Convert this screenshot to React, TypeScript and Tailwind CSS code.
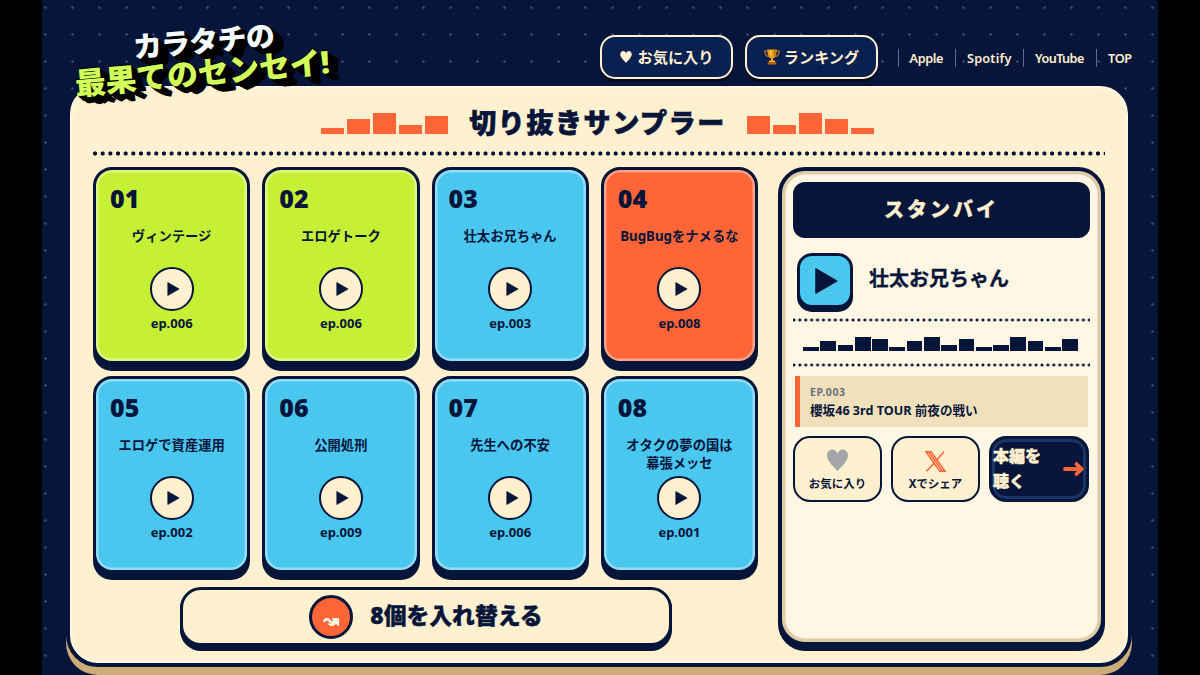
import clsx from "clsx";

const clips = [
  { no: "01", title: ["ヴィンテージ"], ep: "ep.006", color: "bg-[#c6f036]" },
  { no: "02", title: ["エロゲトーク"], ep: "ep.006", color: "bg-[#c6f036]" },
  { no: "03", title: ["壮太お兄ちゃん"], ep: "ep.003", color: "bg-[#4ac7ef]" },
  { no: "04", title: ["BugBugをナメるな"], ep: "ep.008", color: "bg-[#ff6536]" },
  { no: "05", title: ["エロゲで資産運用"], ep: "ep.002", color: "bg-[#4ac7ef]" },
  { no: "06", title: ["公開処刑"], ep: "ep.009", color: "bg-[#4ac7ef]" },
  { no: "07", title: ["先生への不安"], ep: "ep.006", color: "bg-[#4ac7ef]" },
  { no: "08", title: ["オタクの夢の国は", "幕張メッセ"], ep: "ep.001", color: "bg-[#4ac7ef]" },
];

const titleBars = [6, 15, 21, 9, 18];
const waveBars = [4, 10, 6, 14, 12, 4, 10, 14, 6, 12, 4, 6, 14, 10, 4, 12];
const links = [
  { label: "Apple", style: "w-[57.500px] tracking-[-0.400px]" },
  { label: "Spotify", style: "w-[68px] tracking-[0.200px]" },
  { label: "YouTube", style: "w-[73px] tracking-[-0.600px]" },
  { label: "TOP", style: "w-[36px] tracking-[-0.300px]" },
];

function Heart({ className }: { className?: string }) {
  return (
    <svg viewBox="0 0 22 23" className={className} fill="currentColor">
      <path d="M11 23C9.500 19.500 0 13.500 0 6.200 0 2.500 2.400 0 5.600 0 8.400 0 10.300 1.800 11 4.300 11.700 1.800 13.600 0 16.400 0 19.600 0 22 2.500 22 6.200 22 13.500 12.500 19.500 11 23Z" />
    </svg>
  );
}

function Trophy() {
  return (
    <svg viewBox="0 0 16 16" className="h-[16px] w-[16px]">
      <path d="M3.500 2H.8c0 3.200 1.200 5 4 5.600M12.500 2h2.700c0 3.200-1.200 5-4 5.600" fill="none" stroke="#c97a12" strokeWidth="1.200" />
      <path d="M3.300.5h9.400c0 5-1.300 8.300-3.700 9v2.300H7V9.500C4.600 8.800 3.300 5.500 3.300.5Z" fill="#eda01c" />
      <path d="M6 1.500h1.400v6C6.300 6.500 6 4 6 1.500Z" fill="#ffdc6b" />
      <path d="M10 1h1.500c0 3-.5 5.500-1.700 7Z" fill="#a9630a" />
      <path d="M5.500 11.500h5l.8 1.700H4.700Z" fill="#ffc23c" />
      <path d="M3.800 13.200h8.400v2.300H3.800Z" fill="#b8650f" />
    </svg>
  );
}

function Play({ className }: { className?: string }) {
  return (
    <svg viewBox="0 0 22 25" className={className} fill="#061539" stroke="#061539" strokeWidth="1.200" strokeLinejoin="round">
      <path d="M.8.8 21 12.500.8 24.200Z" />
    </svg>
  );
}

function Bars({ heights }: { heights: number[] }) {
  return (
    <div className="flex h-[21px] items-end gap-[2.500px]">
      {heights.map((h, i) => (
        <span key={i} className="w-[23.500px] bg-[#ff6536]" style={{ height: h }} />
      ))}
    </div>
  );
}

function SmallDots() {
  return (
    <div className="h-[4px] bg-[radial-gradient(circle,#061539_1.200px,transparent_1.800px)] bg-[length:5.920px_4px] bg-[position:-2px_0]" />
  );
}

function Logo() {
  return (
    <div className="absolute top-[24px] left-[31px] w-[260px] -rotate-[5deg] font-black whitespace-nowrap">
      <div className="pl-[61px] text-[29px] leading-[33px] tracking-[-0.700px] text-[#f4fcff] [text-shadow:1px_1px_0_#000,2px_2px_0_#000,3px_3px_0_#000,4px_4px_0_#000,5px_5px_0_#000,6px_5px_0_#000,7px_6px_0_#000,8px_7px_0_#000,9px_7px_0_#000,10px_8px_0_#000]">
        カラタチの
      </div>
      <div className="text-[31px] leading-[31px] tracking-[-0.200px] text-[#d3ff5a] [text-shadow:0_-1px_0_#000,1px_1px_0_#000,2px_2px_0_#000,3px_3px_0_#000,4px_4px_0_#000,5px_5px_0_#000,6px_5px_0_#000,7px_6px_0_#000,8px_7px_0_#000,9px_7px_0_#000,10px_8px_0_#000]">
        最果てのセンセイ!
      </div>
    </div>
  );
}

function ClipCard({ clip }: { clip: (typeof clips)[number] }) {
  return (
    <div
      className={clsx(
        "flex flex-col items-center rounded-[19px] border-[3px] border-[#061539] shadow-[0_7px_0_#061539,inset_0_0_0_2.500px_rgba(255,255,255,0.4)]",
        clip.color
      )}
    >
      <div className="mt-[13px] w-full pl-[14px] text-[25px] leading-[30px] font-black">{clip.no}</div>
      <div className="mt-[14px] h-[40px] text-center text-[13.300px] leading-[18px] font-bold whitespace-nowrap">
        {clip.title.map((line) => (
          <div key={line}>{line}</div>
        ))}
      </div>
      <div className="flex size-[44px] shrink-0 items-center justify-center rounded-full border-2 border-[#061539] bg-[#fff0cf]">
        <Play className="ml-[4px] h-[14px] w-[13px]" />
      </div>
      <div className="mt-[3px] text-[13px] leading-[19px] font-bold">{clip.ep}</div>
    </div>
  );
}

function Standby() {
  return (
    <aside className="h-[479px] w-[327px] rounded-[27px] border-4 border-[#061539] bg-[#fff6e4] px-[11px] pt-[11px] shadow-[0_5px_0_#061539,inset_0_0_0_3.500px_#dfcba5]">
      <div className="flex h-[56px] items-center justify-center rounded-[12px] bg-[#061539] text-[20px] font-black tracking-[3px] text-[#fff0cf] [-webkit-text-stroke:0.300px]">
        スタンバイ
      </div>
      <div className="mt-[15px] flex h-[65px] items-start pl-[4px]">
        <div className="flex h-[55px] w-[56px] items-center justify-center rounded-[15px] border-[3px] border-[#061539] bg-[#4ac7ef] shadow-[0_4px_0_#061539]">
          <Play className="ml-[2px] h-[26px] w-[23px]" />
        </div>
        <div className="ml-[16px] text-[20px] leading-[51px] font-bold [-webkit-text-stroke:0.300px]">壮太お兄ちゃん</div>
      </div>
      <SmallDots />
      <div className="flex h-[41px] items-end gap-[1.600px] pr-[12px] pb-[12px] pl-[10px]">
        {waveBars.map((h, i) => (
          <span key={i} className="flex-1 bg-[#061539]" style={{ height: h }} />
        ))}
      </div>
      <SmallDots />
      <div className="mt-[9px] mr-[2px] ml-[2px] h-[51px] border-l-[5px] border-[#ff6536] bg-[#f0e1bc] pt-[8px] pl-[10px]">
        <div className="text-[10.500px] leading-[16px] font-bold tracking-[0.600px] text-[#6a6d7c]">EP.003</div>
        <div className="text-[12.600px] leading-[21px] font-bold whitespace-nowrap">櫻坂46 3rd TOUR 前夜の戦い</div>
      </div>
      <div className="mt-[9px] grid h-[66px] grid-cols-[89px_89px_100px] gap-[9px]">
        <div className="flex flex-col items-center rounded-[17px] border-2 border-[#061539] bg-[#fff0cf] pt-[11px]">
          <Heart className="h-[23px] w-[21px] text-[#a3a5a8]" />
          <div className="mt-[3px] text-[11.500px] leading-[18px] font-bold">お気に入り</div>
        </div>
        <div className="flex flex-col items-center rounded-[17px] border-2 border-[#061539] bg-[#fff0cf] pt-[13px]">
          <svg viewBox="0 0 21 21" className="h-[21px] w-[21px]" fill="none" stroke="#ff6536" strokeWidth="1.500">
            <path d="M1 .8h5.200L20 20.200h-5.200L1 .8ZM3.700.8 17.400 20.200M19 .8l-7.800 8.700M9.300 11.700 1.500 20.200" />
          </svg>
          <div className="mt-[3px] text-[11.500px] leading-[18px] font-bold">Xでシェア</div>
        </div>
        <div className="flex items-center rounded-[17px] border-[3px] border-[#061539] bg-[#061539] text-[#fff0cf] shadow-[inset_0_0_0_3px_#1c3569]">
          <div className="w-[56px] pl-[1px] text-[16px] leading-[25px] font-black [-webkit-text-stroke:0.400px]">
            本編を
            <br />
            聴く
          </div>
          <svg viewBox="0 0 21 14" className="ml-[15px] h-[14px] w-[21px] shrink-0" fill="none" stroke="#ff6536" strokeWidth="3.800" strokeLinecap="round" strokeLinejoin="round">
            <path d="M2 7h16M13.500 2 18.700 7l-5.200 5" />
          </svg>
        </div>
      </div>
    </aside>
  );
}

export default function App() {
  return (
    <div className="flex h-[675px] w-[1200px] justify-center overflow-hidden bg-black font-['Noto_Sans','Noto_Sans_CJK_JP',sans-serif] text-[#061539]">
      <div className="relative h-[675px] w-[1116px] overflow-hidden bg-[#061539] bg-[radial-gradient(circle_at_3.500px_7.500px,#33466f_1px,transparent_1.500px)] bg-[length:27px_27px]">
        <header className="flex h-[82px] items-start justify-end pt-[35px] pr-[26px] text-[#fff0cf]">
          <div className="flex gap-[12px]">
            <div className="flex h-[44px] w-[133px] items-center justify-center gap-[6px] rounded-[15px] border-2 border-[#fff0cf] bg-[#0a2050] text-[15.200px] font-bold shadow-[0_3px_0_#030b20]">
              <Heart className="h-[12px] w-[12px]" />
              お気に入り
            </div>
            <div className="flex h-[44px] w-[133px] items-center justify-center gap-[4px] rounded-[15px] border-2 border-[#fff0cf] bg-[#0a2050] text-[15.200px] font-bold shadow-[0_3px_0_#030b20]">
              <Trophy />
              ランキング
            </div>
          </div>
          <nav className="ml-[19.500px] flex h-[45px] items-center text-[12.700px] font-semibold">
            {links.map((link) => (
              <a key={link.label} className={clsx("border-l border-[#5e6c8c] pl-[11px] leading-[18px]", link.style)}>
                {link.label}
              </a>
            ))}
          </nav>
        </header>

        <main className="mr-[26px] ml-[24px] h-[585px] rounded-[32px] border-4 border-[#061539] bg-[#fff0cf] px-[23px] shadow-[0_8px_0_#ccad78,inset_0_0_4px_2px_#fffaea]">
          <div className="flex h-[65px] items-center justify-center gap-[21px] pt-[9px] pr-[3px]">
            <Bars heights={titleBars} />
            <h1 className="text-[27px] leading-[36px] font-black tracking-[1.600px] whitespace-nowrap [-webkit-text-stroke:0.700px]">
              切り抜きサンプラー
            </h1>
            <Bars heights={[...titleBars].reverse()} />
          </div>
          <div className="h-[5px] bg-[radial-gradient(circle,#061539_1.800px,transparent_2.400px)] bg-[length:7.670px_5px] bg-[position:-1.800px_0]" />
          <div className="mt-[11px] flex justify-between">
            <div className="w-[665px]">
              <div className="grid h-[406px] grid-cols-4 grid-rows-2 gap-[12px]">
                {clips.map((clip) => (
                  <ClipCard key={clip.no} clip={clip} />
                ))}
              </div>
              <div className="mt-[14px] ml-[87px] flex h-[59px] w-[492px] items-center justify-center gap-[17px] rounded-[21px] border-[3px] border-[#061539] bg-[#fff0cf] shadow-[0_1px_0_#061539,0_3px_0_#061539,0_5px_0_#061539]">
                <div className="flex size-[44px] items-center justify-center rounded-full border-[3px] border-[#061539] bg-[#ff6536]">
                  <svg viewBox="0 0 17 10" className="mt-[10px] h-[10px] w-[17px]" fill="none" stroke="#fff8e8" strokeWidth="2.600" strokeLinecap="round" strokeLinejoin="round">
                    <path d="M1.500 3.800C3 1.500 5 1.500 6.500 3.800S9.500 6.500 12.500 3.500" />
                    <path d="M10 1.800h5.200v6.200L10 1.800Z" fill="#fff8e8" strokeWidth="1.800" />
                    <path d="M6 7c2 1.800 4 1.500 6-.5" strokeWidth="1.800" />
                  </svg>
                </div>
                <span className="text-[22.800px] font-black [-webkit-text-stroke:0.400px]">8個を入れ替える</span>
              </div>
            </div>
            <Standby />
          </div>
        </main>
        <Logo />
      </div>
    </div>
  );
}
